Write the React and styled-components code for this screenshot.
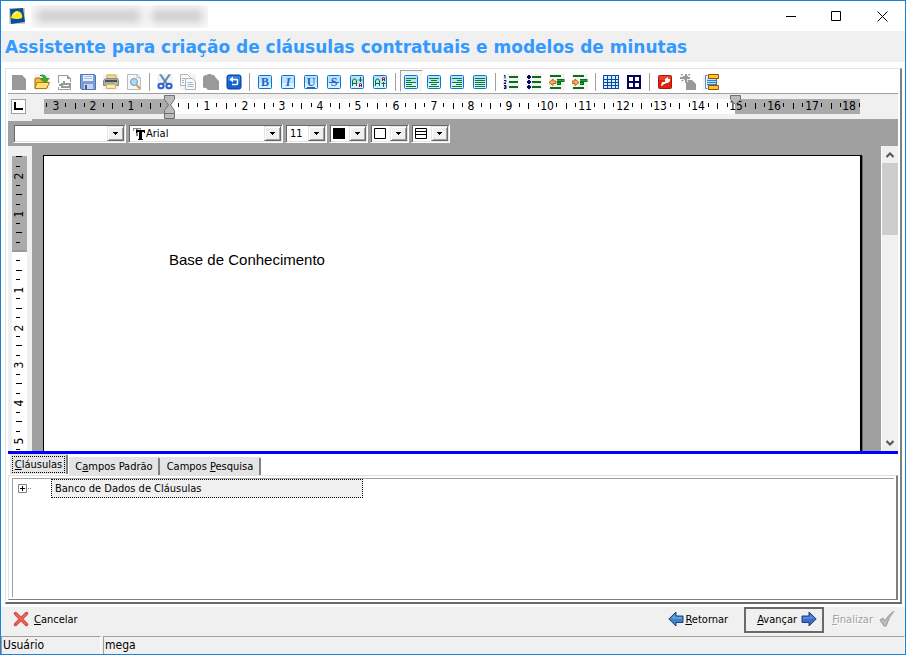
import React, { useLayoutEffect, useRef, useState } from 'react'

import styled, { createGlobalStyle, css } from 'styled-components'

const GlobalStyle = createGlobalStyle`
  * {
    box-sizing: border-box;
  }

  body {
    margin: 0;
    font-family: 'DejaVu Sans Condensed', 'DejaVu Sans', sans-serif;
    font-size: 11px;
    color: #000;
  }

  button,
  select {
    font: inherit;
    color: inherit;
    margin: 0;
    padding: 0;
    border: 0;
    background: none;
    outline: none;
  }

  svg {
    display: block;
    flex: none;
  }
`

const Window = styled.div`
  display: flex;
  flex-direction: column;
  height: 100vh;
  min-height: 480px;
  border: 1px solid #1883d7;
  background: #f0f0f0;
  overflow: hidden;
`

const TitleBar = styled.header`
  display: flex;
  align-items: center;
  flex: none;
  height: 30px;
  padding-left: 8px;
  background: #fff;
`

const HiddenTitle = styled.div`
  display: flex;
  align-items: center;
  gap: 10px;
  flex: none;
  width: 177px;
  height: 23px;
  margin-left: 6px;
  padding: 0 5px;
  background: #fbfafb;
  overflow: hidden;
`

const Smudge = styled.span`
  flex: ${props => props.$size};
  height: 14px;
  background: #cfcdcf;
  filter: blur(5px);
`

const WindowButtons = styled.div`
  display: flex;
  margin-left: auto;
`

const WindowButton = styled.button`
  display: flex;
  align-items: center;
  justify-content: center;
  width: 46px;
  height: 28px;
`

const Heading = styled.h1`
  flex: none;
  margin: 0;
  padding: 0 4px;
  height: 31px;
  line-height: 33px;
  font-family: 'DejaVu Sans', sans-serif;
  font-size: 17px;
  font-weight: bold;
  color: #3399ff;
  white-space: nowrap;
`

const Body = styled.main`
  display: flex;
  flex: 1;
  min-height: 0;
  padding: 6px 3px 3px 4px;
  background: #fff;
`

const Frame = styled.div`
  display: flex;
  flex-direction: column;
  flex: 1;
  min-width: 0;
  border: 1px solid #e3e3e3;
  border-right: 2px solid #808080;
  border-bottom: 2px solid #696969;
  padding: 0 2px 2px;
`

const Toolbar = styled.div`
  display: flex;
  align-items: center;
  flex: none;
  height: 25px;
  border-bottom: 1px solid #a0a0a0;
`

const ToolButton = styled.button`
  display: flex;
  align-items: center;
  flex: none;
  width: 23px;
  height: 22px;
  padding: 2px 0 0 3px;

  ${props =>
    props.$pressed &&
    css`
      padding: 2px 0 0 2px;
      border: 1px solid #fff;
      border-top-color: #a0a0a0;
      border-left-color: #a0a0a0;
      background: #f5f5f5;
    `}
`

const ToolSeparator = styled.span`
  flex: none;
  width: 1px;
  height: 18px;
  margin: 1px 4px 0 3px;
  background: #a0a0a0;
`

const RulerRow = styled.div`
  display: flex;
  align-items: center;
  flex: none;
  gap: 18px;
  height: 25px;
  padding-left: 3px;
  background: #f0f0f0;
`

const TabStop = styled.button`
  display: flex;
  align-items: center;
  justify-content: center;
  flex: none;
  width: 15px;
  height: 15px;
  border: 1px solid #a0a0a0;
  background: #fff;
`

const FormatBar = styled.div`
  display: flex;
  flex: none;
  gap: 2px;
  height: 27px;
  padding: 5px 5px 3px;
  background: linear-gradient(#f0f0f0, #f0f0f0) 0 0 / 24px 2px no-repeat, #a0a0a0;
`

const sunken = css`
  border: 1px solid #fff;
  border-top-color: #a0a0a0;
  border-left-color: #a0a0a0;
  box-shadow: inset 1px 1px #696969, inset -1px -1px #e3e3e3;
`

const ComboBox = styled.label`
  ${sunken}
  display: flex;
  align-items: center;
  flex: none;
  gap: 1px;
  width: ${props => props.$width}px;
  height: 19px;
  padding: 1px 1px 1px 4px;
  background-color: #fff;

  & select {
    appearance: none;
    flex: 1;
    min-width: 0;
    height: 15px;
    line-height: 15px;
  }
`

const PickerButton = styled.button`
  ${sunken}
  display: flex;
  align-items: center;
  justify-content: space-between;
  flex: none;
  width: 39px;
  height: 19px;
  padding: 1px 1px 1px 3px;
  background-color: #fff;
`

const ArrowFace = styled.span`
  display: flex;
  align-items: center;
  justify-content: center;
  flex: none;
  width: 17px;
  height: 15px;
  border: 1px solid #e3e3e3;
  border-right-color: #696969;
  border-bottom-color: #696969;
  background: #f0f0f0;
  box-shadow: inset 1px 1px #fff, inset -1px -1px #a0a0a0;
`

const Editor = styled.div`
  display: flex;
  flex: 1;
  min-height: 0;
  background: #a0a0a0;
`

const SideRuler = styled.div`
  flex: none;
  width: 24px;
  padding: 10px 5px 0 4px;
  background: #f0f0f0;
  overflow: hidden;
`

const Canvas = styled.div`
  flex: 1;
  min-width: 0;
  padding: 9px 11px 0;
  overflow: hidden;
`

const Page = styled.article`
  width: 819px;
  height: 100%;
  padding: 95px 125px 0;
  border: 1px solid #000;
  border-right-width: 2px;
  border-bottom: 0;
  background: #fff;
  box-shadow: 1px 1px #696969;
  font-family: 'Liberation Sans', sans-serif;
  font-size: 15px;
  line-height: 17px;

  & p {
    margin: 0;
  }
`

const ScrollBar = styled.div`
  display: flex;
  flex-direction: column;
  flex: none;
  width: 17px;
  background: #f0f0f0;
  border-left: 1px solid #fff;
`

const ScrollArrow = styled.button`
  display: flex;
  align-items: center;
  justify-content: center;
  flex: none;
  width: 16px;
  height: 17px;
`

const ScrollTrack = styled.div`
  flex: 1;
`

const ScrollThumb = styled.div`
  height: 72px;
  background: #cdcdcd;
`

const Splitter = styled.div`
  flex: none;
  height: 3px;
  background: #00f;
`

const TabList = styled.div`
  display: flex;
  align-items: flex-end;
  flex: none;
  height: 21px;
  padding-left: 2px;
`

const Tab = styled.button`
  flex: none;
  width: ${props => props.$width}px;
  height: 18px;
  border: 1px solid #e3e3e3;
  border-right: 2px solid #808080;
  border-bottom: 0;
  border-radius: 2px 2px 0 0;
  background: #e4e4e4;

  ${props =>
    props.$active &&
    css`
      align-self: flex-start;
      height: 20px;
      margin-right: 1px;
      padding: 0 1px 1px;
    `}
`

const TabFocus = styled.span`
  display: block;
  height: 17px;
  line-height: 15px;
  border: 1px dotted #000;
`

const TabPage = styled.div`
  flex: none;
  height: 125px;
  padding: 2px 2px 2px 3px;
  border: 1px solid #e3e3e3;
  border-right: 2px solid #808080;
  border-bottom: 1px solid #808080;
`

const Tree = styled.ul`
  list-style: none;
  height: 100%;
  margin: 0;
  padding: 0 0 0 5px;
  border: 1px solid #a0a0a0;
  border-right: 0;
  border-bottom: 0;
`

const TreeNode = styled.li`
  display: flex;
  align-items: center;
  gap: 20px;
`

const TreeLabel = styled.span`
  width: 312px;
  height: 19px;
  padding-left: 3px;
  line-height: 17px;
  border: 1px dotted #000;
  background: #f0f0f0;
`

const ActionBar = styled.footer`
  display: flex;
  align-items: center;
  flex: none;
  height: 29px;
  padding: 0 10px 3px 12px;
`

const ActionButton = styled.button`
  display: flex;
  align-items: center;
  gap: ${props => props.$gap}px;
  height: 26px;
  margin-left: ${props => (props.$push ? 'auto' : '0')};
  padding-bottom: 2px;

  &:disabled {
    color: #a0a0a0;
    text-shadow: 1px 1px #fff;
  }
`

const DefaultButton = styled(ActionButton)`
  width: 80px;
  margin: 0 8px 0 16px;
  padding-left: 11px;
  border: 2px solid #696969;
`

const StatusBar = styled.div`
  display: flex;
  flex: none;
  gap: 2px;
  height: 18px;
  font-size: 12px;
  line-height: 16px;
`

const StatusCell = styled.div`
  flex: ${props => (props.$width ? 'none' : '1')};
  width: ${props => props.$width}px;
  padding-left: 1px;
  border-top: 1px solid #a0a0a0;
  border-left: 1px solid #a0a0a0;
  border-right: 1px solid #fff;
`

const CM = 37.8

const Ticks = ({ from, to }) => {
  const marks = []
  for (let q = from * 4; q <= to * 4; q++) {
    const x = Math.round((q * CM) / 4)
    if (q === 0) continue
    if (q % 4 === 0) {
      marks.push(
        <text key={q} x={x} y="12" fontSize="12" textAnchor="middle">
          {Math.abs(q / 4)}
        </text>
      )
    } else {
      marks.push(
        <rect key={q} x={x} y="5" width="1" height={q % 2 === 0 ? 6 : 4} />
      )
    }
  }
  return marks
}

const TopRuler = () => (
  <svg width="816" height="21" viewBox="0 0 816 21" overflow="visible">
    <rect y="3" width="816" height="15" fill="#fff" />
    <rect y="3" width="125" height="15" fill="#aaa" />
    <rect x="691" y="3" width="125" height="15" fill="#aaa" />
    <g transform="translate(125 2)">
      <Ticks from={-3.25} to={18.25} />
    </g>
    <g fill="#bbb" stroke="#707070">
      <path d="M120.500-.5h10v4l-4 5.500 4 5.500v3h-10v-3l4-5.500-4-5.500z" />
      <path d="M120.500 17.500h10v5h-10z" />
      <path d="M686.500-.5h10v4l-5 5-5-5z" />
    </g>
  </svg>
)

const LeftRuler = () => {
  const holder = useRef(null)
  const [height, setHeight] = useState(0)

  // only draw the centimetres that fit beside the page
  useLayoutEffect(() => {
    const measure = () => setHeight(holder.current.clientHeight - 10)
    const observer = new ResizeObserver(measure)
    measure()
    observer.observe(holder.current)
    return () => observer.disconnect()
  }, [])

  const below = Math.max(0, Math.floor(((height - 96) / CM) * 4) / 4)

  return (
    <SideRuler ref={holder}>
      <svg width="15" height={Math.max(0, height)}>
        <rect width="15" height="100%" fill="#fff" />
        <rect width="15" height="94" fill="#aaa" />
        <rect y="94" width="15" height="2" fill="#999" />
        <g transform="translate(-1 96) rotate(-90)">
          <Ticks from={-below} to={2.5} />
        </g>
      </svg>
    </SideRuler>
  )
}

/* toolbar glyphs, all on a 16px grid */

const Icon = ({ children }) => (
  <svg width="16" height="16" viewBox="0 0 16 16">
    {children}
  </svg>
)

const grid = fill => <rect width="16" height="16" fill={fill} />

const NewIcon = () => (
  <Icon>
    <path d="M1 1h10l4 4v11H1z" fill="#999" />
  </Icon>
)

const OpenIcon = () => (
  <Icon>
    {grid('#f3f3f3')}
    <path d="M1 14V5l1-1h4l1 2h6v8z" fill="#f2bd35" stroke="#a86a08" />
    <path d="M1 14.5l2-6h12.500l-3 6z" fill="#ffe477" stroke="#b87808" />
    <path
      d="M6 1.500c4-1 6 0 6 3h3l-4 4l-4-4h2.500c0-2-1-2.500-3.500-3z"
      fill="#35b62c"
      stroke="#16801a"
      strokeWidth=".8"
    />
  </Icon>
)

const ImportIcon = () => (
  <Icon>
    <path d="M1.500 9V1.500h9l3 3V8M1.500 13v2.500h12V13" fill="#fff" stroke="#999" />
    <path d="M10 1v4h4z" fill="#999" />
    <path d="M4 9h2V7h2v2h6v5H4v-2H2v-2h2z" fill="#999" />
    <path d="M6 11.500h6" stroke="#fff" />
  </Icon>
)

const SaveIcon = () => (
  <Icon>
    <path d="M.5.5h14l1 1v14h-14l-1-1z" fill="#7f9cd6" stroke="#4f74ba" />
    <path d="M3 1h10v6H3z" fill="#e8f0fb" />
    <path d="M4 2.500h8M4 4.500h8" stroke="#a6bfe2" />
    <path d="M4 10h9v5H4z" fill="#c8d4e8" />
    <path d="M5 11h2v4H5z" fill="#3b5f9e" />
  </Icon>
)

const PrintIcon = () => (
  <Icon>
    {grid('#f3f3f3')}
    <path d="M4 1h9v5H4z" fill="#f7d987" stroke="#d4a648" />
    <path d="M.5 6.500l2-2h12l1 2v5H.5z" fill="#aaa" stroke="#888" />
    <path d="M2 6h12v2H2z" fill="#505050" />
    <path d="M3.500 10.500h9v4h-9z" fill="#fbe9ae" stroke="#d4b468" />
    <path d="M12 9h2v1h-2z" fill="#f5d040" />
  </Icon>
)

const PreviewIcon = () => (
  <Icon>
    <path d="M1.500.5h10l3 3v12h-13z" fill="#f6f6f6" stroke="#bbb" />
    <path d="M11 .5v3.500h3.500" fill="#eee" stroke="#bbb" />
    <circle cx="8" cy="8" r="3.500" fill="#a9dcf6" stroke="#7796b4" />
    <path d="M10.500 11l3.500 3.500" stroke="#ce9a55" strokeWidth="2" />
  </Icon>
)

const CutIcon = () => (
  <Icon>
    {grid('#f3f3f3')}
    <path d="M3 0l7 10M13 0L6 10" stroke="#7da7c9" strokeWidth="2.200" />
    <path d="M4 1l5 8M12 1L7 9" stroke="#466f98" strokeWidth=".7" />
    <g fill="none" stroke="#2b61cf" strokeWidth="2">
      <ellipse cx="4" cy="12" rx="2.600" ry="2.200" />
      <ellipse cx="12" cy="12" rx="2.600" ry="2.200" />
    </g>
  </Icon>
)

const CopyIcon = () => (
  <Icon>
    {grid('#f3f3f3')}
    <g fill="#fafafa" stroke="#b3b3b3">
      <path d="M.5.5h7l3 3v8H.5z" />
      <path d="M5.500 4.500h7l3 3v8h-10z" />
    </g>
    <path
      d="M2 4.500h3M2 6.500h2M2 8.500h2M7.500 8.500h5M7.500 10.500h6M7.500 12.500h6"
      stroke="#9eb5d6"
    />
  </Icon>
)

const PasteIcon = () => (
  <Icon>
    <path d="M0 3l2-2h2l1-1h3l1 1h2l2 3l3 3v9H5l-2-2H1l-1-1z" fill="#999" />
  </Icon>
)

const UndoIcon = () => (
  <Icon>
    <rect x="1" y="1" width="14" height="14" rx="2" fill="#1262cf" stroke="#073fa0" />
    <path d="M2 2h12v5H2z" fill="#2f80e2" />
    <path
      d="M5 5.500h5.500q1 0 1 1v3q0 1-1 1H6"
      fill="none"
      stroke="#fff"
      strokeWidth="1.500"
    />
    <path d="M3.500 5.500L7 2.500v6z" fill="#fff" />
  </Icon>
)

const BlueTile = ({ children }) => (
  <Icon>
    <rect x="1.500" y="1.500" width="13" height="13" rx="1" fill="#b9e2ff" stroke="#0b74d1" />
    <path d="M2 9h12v5H2z" fill="#d8f1ff" />
    {children}
  </Icon>
)

const LetterIcon = ({ letter, italic, line }) => (
  <BlueTile>
    <text
      x="8"
      y="12"
      textAnchor="middle"
      fontFamily="Liberation Serif, serif"
      fontSize="12"
      fontWeight="bold"
      fontStyle={italic ? 'italic' : 'normal'}
      fill="#2a62bd"
    >
      {letter}
    </text>
    {line && <path d={line} stroke="#2a62bd" />}
  </BlueTile>
)

const ScriptIcon = ({ up }) => (
  <BlueTile>
    <path d="M3.500 12V7l1-2h2l1 2v5M4 9.500h3" fill="none" stroke="#087225" />
    <path
      d={up ? 'M11.500 8v5M9.500 9.500h4' : 'M11.500 3v5M9.500 6h4'}
      stroke="#087225"
    />
    <path
      d={
        up
          ? 'M10.500 7V4l1-1l1 1v3M10.500 5.500h2'
          : 'M10.500 13v-3l1-1l1 1v3M10.500 11.500h2'
      }
      fill="none"
      stroke="#a31535"
    />
  </BlueTile>
)

const AlignIcon = ({ lines }) => (
  <BlueTile>
    <path d={lines} stroke="#087d20" />
  </BlueTile>
)

const ListIcon = ({ numbered }) => (
  <Icon>
    {grid('#f3f3f3')}
    <path d="M6 3h9M6 8h9M6 13h9" stroke="#087018" strokeWidth="2" />
    {numbered ? (
      <path
        d="M1 1.500h1v3M1 6.500h2v1l-2 2h2M1 11.500h2v1.500H1.500H3v1.500H1"
        fill="none"
        stroke="#080870"
      />
    ) : (
      <path
        d="M1 2h1V1h2v1h1v2H4v1H2V4H1zM1 7h1V6h2v1h1v2H4v1H2V9H1zM1 12h1v-1h2v1h1v2H4v1H2v-1H1z"
        fill="#080870"
      />
    )}
  </Icon>
)

const IndentIcon = ({ right }) => (
  <Icon>
    {grid('#f3f3f3')}
    <path d="M1 2h11M1 14h11" stroke="#087018" strokeWidth="2" />
    <path d="M8 6.500h7.500M8 9.500h4" stroke="#087018" strokeWidth="3" />
    <path d="M8 6.500h7M8 9.500h3" stroke="#20a830" />
    <path
      d={right ? 'M0 7h3V5l4 3.500l-4 3V9.500H0z' : 'M7 7H4V5L0 8.500l4 3V9.500h3z'}
      fill="#ffb050"
      stroke="#a94e08"
      strokeWidth=".8"
    />
  </Icon>
)

const TableIcon = () => (
  <Icon>
    <path d="M0 1h16v14H0z" fill="#0b49a8" />
    {[1, 5, 9, 13].map(x =>
      [2, 6, 9, 12].map(y => (
        <rect
          key={x + '-' + y}
          x={x}
          y={y}
          width={x === 13 ? 2 : 3}
          height={y === 2 ? 3 : 2}
          fill="#d4eeff"
        />
      ))
    )}
  </Icon>
)

const BordersIcon = () => (
  <Icon>
    <path d="M1 1h14v14H1z" fill="#04045c" />
    <path d="M3 3h4v4H3zM9 3h4v4H9zM3 9h4v4H3zM9 9h4v4H9z" fill="#fff" />
  </Icon>
)

const ToolIcon = () => (
  <Icon>
    <rect x="1.500" y="1.500" width="13" height="13" rx="1" fill="#df210d" stroke="#ad1608" />
    <path d="M2 2h12v4H2z" fill="#e8402a" />
    <path d="M4 12l1-4h3V5l3-2v2h2v2l-2 2H9l-1 1H7l-2 2z" fill="#fff" />
  </Icon>
)

const SparkIcon = () => (
  <Icon>
    <path d="M5 0h2v3h3v2H7v4H5V5H0V3h5z" fill="#999" />
    <path d="M1 0l9 8M10 0L1 8" stroke="#999" strokeWidth="1.500" strokeDasharray="2 1" />
    <path d="M6 8h2l1-2h3l4 4v6H6z" fill="#999" />
  </Icon>
)

const HeaderFooterIcon = () => (
  <Icon>
    {grid('#f3f3f3')}
    <path d="M4.500 1.500h-2v13h2" fill="none" stroke="#6a84c2" />
    <path d="M4 4h9v8H4z" fill="#b4e2ff" />
    <path d="M4 6.500h9M4 8.500h9M4 10.500h9" stroke="#2782d1" />
    <path d="M13.500 5v6" stroke="#4668b5" />
    <g fill="#ffc51c" stroke="#965107">
      <path d="M5.500.5h10v4h-10zM5.500 11.500h10v4h-10z" />
    </g>
  </Icon>
)

const leftLines = 'M3 4.500h10M3 6.500h5M3 8.500h10M3 10.500h6M3 12.500h10'
const centerLines = 'M3 4.500h10M5 6.500h6M3 8.500h10M5 10.500h6M3 12.500h10'
const rightLines = 'M3 4.500h10M8 6.500h5M3 8.500h10M7 10.500h6M3 12.500h10'
const fullLines = 'M3 4.500h10M3 6.500h10M3 8.500h10M3 10.500h10M3 12.500h10'

const toolGroups = [
  [
    ['Novo', <NewIcon />],
    ['Abrir', <OpenIcon />],
    ['Importar', <ImportIcon />],
    ['Salvar', <SaveIcon />],
    ['Imprimir', <PrintIcon />],
    ['Visualizar', <PreviewIcon />]
  ],
  [
    ['Recortar', <CutIcon />],
    ['Copiar', <CopyIcon />],
    ['Colar', <PasteIcon />],
    ['Desfazer', <UndoIcon />]
  ],
  [
    ['Negrito', <LetterIcon letter="B" />],
    ['Itálico', <LetterIcon letter="I" italic />],
    ['Sublinhado', <LetterIcon letter="U" line="M4 13.500h8" />],
    ['Tachado', <LetterIcon letter="S" line="M3 8.500h10" />],
    ['Subscrito', <ScriptIcon />],
    ['Sobrescrito', <ScriptIcon up />]
  ],
  [
    ['Alinhar à esquerda', <AlignIcon lines={leftLines} />, true],
    ['Centralizar', <AlignIcon lines={centerLines} />],
    ['Alinhar à direita', <AlignIcon lines={rightLines} />],
    ['Justificar', <AlignIcon lines={fullLines} />]
  ],
  [
    ['Numeração', <ListIcon numbered />],
    ['Marcadores', <ListIcon />],
    ['Diminuir recuo', <IndentIcon />],
    ['Aumentar recuo', <IndentIcon right />]
  ],
  [
    ['Tabela', <TableIcon />],
    ['Bordas', <BordersIcon />]
  ],
  [
    ['Ferramentas', <ToolIcon />],
    ['Inserir campo', <SparkIcon />],
    ['Cabeçalho e rodapé', <HeaderFooterIcon />]
  ]
]

const Arrow = () => (
  <ArrowFace aria-hidden="true">
    <svg width="5" height="3" viewBox="0 0 5 3" shapeRendering="crispEdges">
      <path d="M0 0h5v1H4v1H3v1H2V2H1V1H0z" />
    </svg>
  </ArrowFace>
)

const Picker = ({ label, children }) => (
  <PickerButton aria-label={label} aria-haspopup="listbox">
    <svg width="12" height="11" viewBox="0 0 12 11">
      {children}
    </svg>
    <Arrow />
  </PickerButton>
)

const Chevron = ({ d }) => (
  <svg width="8" height="6" viewBox="0 0 8 6">
    <path d={d} fill="none" stroke="#555" strokeWidth="2" />
  </svg>
)

const BlueArrow = ({ right }) => (
  <Icon>
    <g transform={right ? 'translate(16 0) scale(-1 1)' : undefined}>
      <path
        d="M.8 8L8 1v4h7v6.500H8V15z"
        fill={right ? '#3a6cc8' : '#3f82c4'}
        stroke="#1c3f87"
        strokeLinejoin="round"
      />
      <path d="M3 7.500L7 3.500V6h7v2z" fill={right ? '#5a8ad8' : '#62a8d0'} />
    </g>
  </Icon>
)

const App = () => (
  <>
    <GlobalStyle />
    <Window>
      <TitleBar>
        <Icon>
          {grid('#d5cfc2')}
          <path d="M1 1l13-1l2 14l-14 2z" fill="#0750a0" />
          <path d="M2 10C3 5 6 3 8 3c4 0 6 4 5 7q-5 2-11 0z" fill="#ffe924" />
          <path d="M4 7q3-4 6-3q-3 0-4 3z" fill="#fffbb0" />
        </Icon>
        <HiddenTitle>
          <Smudge $size={2} />
          <Smudge $size={1} />
        </HiddenTitle>
        <WindowButtons>
          <WindowButton aria-label="Minimizar">
            <svg width="11" height="11" stroke="#000">
              <path d="M1 5.500h10" />
            </svg>
          </WindowButton>
          <WindowButton aria-label="Maximizar">
            <svg width="11" height="11" stroke="#000" fill="none">
              <path d="M.5.5h9v9h-9z" />
            </svg>
          </WindowButton>
          <WindowButton aria-label="Fechar">
            <svg width="11" height="11" stroke="#000">
              <path d="M.5.5l10 10M10.500.5l-10 10" />
            </svg>
          </WindowButton>
        </WindowButtons>
      </TitleBar>
      <Heading>
        Assistente para criação de cláusulas contratuais e modelos de minutas
      </Heading>
      <Body>
        <Frame>
          <Toolbar role="toolbar">
            {toolGroups.map((group, index) => (
              <React.Fragment key={index}>
                {index > 0 && <ToolSeparator />}
                {group.map(([label, icon, pressed]) => (
                  <ToolButton key={label} aria-label={label} $pressed={pressed}>
                    {icon}
                  </ToolButton>
                ))}
              </React.Fragment>
            ))}
          </Toolbar>
          <RulerRow>
            <TabStop aria-label="Tabulação">
              <svg width="9" height="9">
                <path d="M1 0v7h8" fill="none" stroke="#000" strokeWidth="2" />
              </svg>
            </TabStop>
            <TopRuler />
          </RulerRow>
          <FormatBar>
            <ComboBox $width={113}>
              <select aria-label="Estilo">
                <option></option>
              </select>
              <Arrow />
            </ComboBox>
            <ComboBox $width={155}>
              <svg width="12" height="12" viewBox="0 0 12 12">
                <path d="M0 0h8v3H7V1H5v7H3V1H1v2H0z" fill="#888" />
                <path d="M3 2h9v3h-1V4H9v7h1v1H5v-1h1V4H4v1H3z" />
              </svg>
              <select aria-label="Fonte">
                <option>Arial</option>
              </select>
              <Arrow />
            </ComboBox>
            <ComboBox $width={42}>
              <select aria-label="Tamanho">
                <option>11</option>
              </select>
              <Arrow />
            </ComboBox>
            <Picker label="Cor do texto">
              <path d="M0 0h12v11H0z" />
            </Picker>
            <Picker label="Cor de fundo">
              <path d="M.5.5h11v10H.5z" fill="#fff" stroke="#000" />
            </Picker>
            <Picker label="Bordas">
              <path d="M.5.5h11v10H.5zM0 3.500h12M0 6.500h12" fill="#fff" stroke="#000" />
            </Picker>
          </FormatBar>
          <Editor>
            <LeftRuler />
            <Canvas>
              <Page>
                <p>Base de Conhecimento</p>
              </Page>
            </Canvas>
            <ScrollBar>
              <ScrollArrow aria-label="Rolar para cima">
                <Chevron d="M.5 5L4 1.500L7.500 5" />
              </ScrollArrow>
              <ScrollTrack>
                <ScrollThumb />
              </ScrollTrack>
              <ScrollArrow aria-label="Rolar para baixo">
                <Chevron d="M.5 1L4 4.500L7.500 1" />
              </ScrollArrow>
            </ScrollBar>
          </Editor>
          <Splitter />
          <TabList role="tablist">
            <Tab role="tab" aria-selected="true" $width={58} $active>
              <TabFocus>
                <u>C</u>láusulas
              </TabFocus>
            </Tab>
            <Tab role="tab" $width={91}>
              C<u>a</u>mpos Padrão
            </Tab>
            <Tab role="tab" $width={101}>
              Campos <u>P</u>esquisa
            </Tab>
          </TabList>
          <TabPage role="tabpanel">
            <Tree role="tree">
              <TreeNode role="treeitem">
                <svg width="13" height="9" viewBox="0 0 13 9">
                  <path d="M.5.5h8v8h-8z" fill="#fff" stroke="#808080" />
                  <path d="M2 4.500h5M4.500 2v5" stroke="#000" />
                  <path d="M10 4.500h1M12 4.500h1" stroke="#808080" />
                </svg>
                <TreeLabel>Banco de Dados de Cláusulas</TreeLabel>
              </TreeNode>
            </Tree>
          </TabPage>
        </Frame>
      </Body>
      <ActionBar>
        <ActionButton $gap={5}>
          <Icon>
            <path
              d="M2.500 2.500l11 11M13.500 2.500l-11 11"
              stroke="#cf4540"
              strokeWidth="3.500"
              strokeLinecap="round"
            />
            <path
              d="M3 3l10 10M13 3L3 13"
              stroke="#ea6455"
              strokeWidth="2"
              strokeLinecap="round"
            />
          </Icon>
          <span>
            <u>C</u>ancelar
          </span>
        </ActionButton>
        <ActionButton $gap={1} $push>
          <BlueArrow />
          <span>
            <u>R</u>etornar
          </span>
        </ActionButton>
        <DefaultButton $gap={4}>
          <span>
            <u>A</u>vançar
          </span>
          <BlueArrow right />
        </DefaultButton>
        <ActionButton $gap={6} disabled>
          <span>
            <u>F</u>inalizar
          </span>
          <Icon>
            <path d="M1 9l3-2l2 3q3-6 9-10q-5 6-8 15H5z" fill="#bcbcbc" stroke="#999" />
          </Icon>
        </ActionButton>
      </ActionBar>
      <StatusBar>
        <StatusCell $width={100}>Usuário</StatusCell>
        <StatusCell>mega</StatusCell>
      </StatusBar>
    </Window>
  </>
)

export default App
